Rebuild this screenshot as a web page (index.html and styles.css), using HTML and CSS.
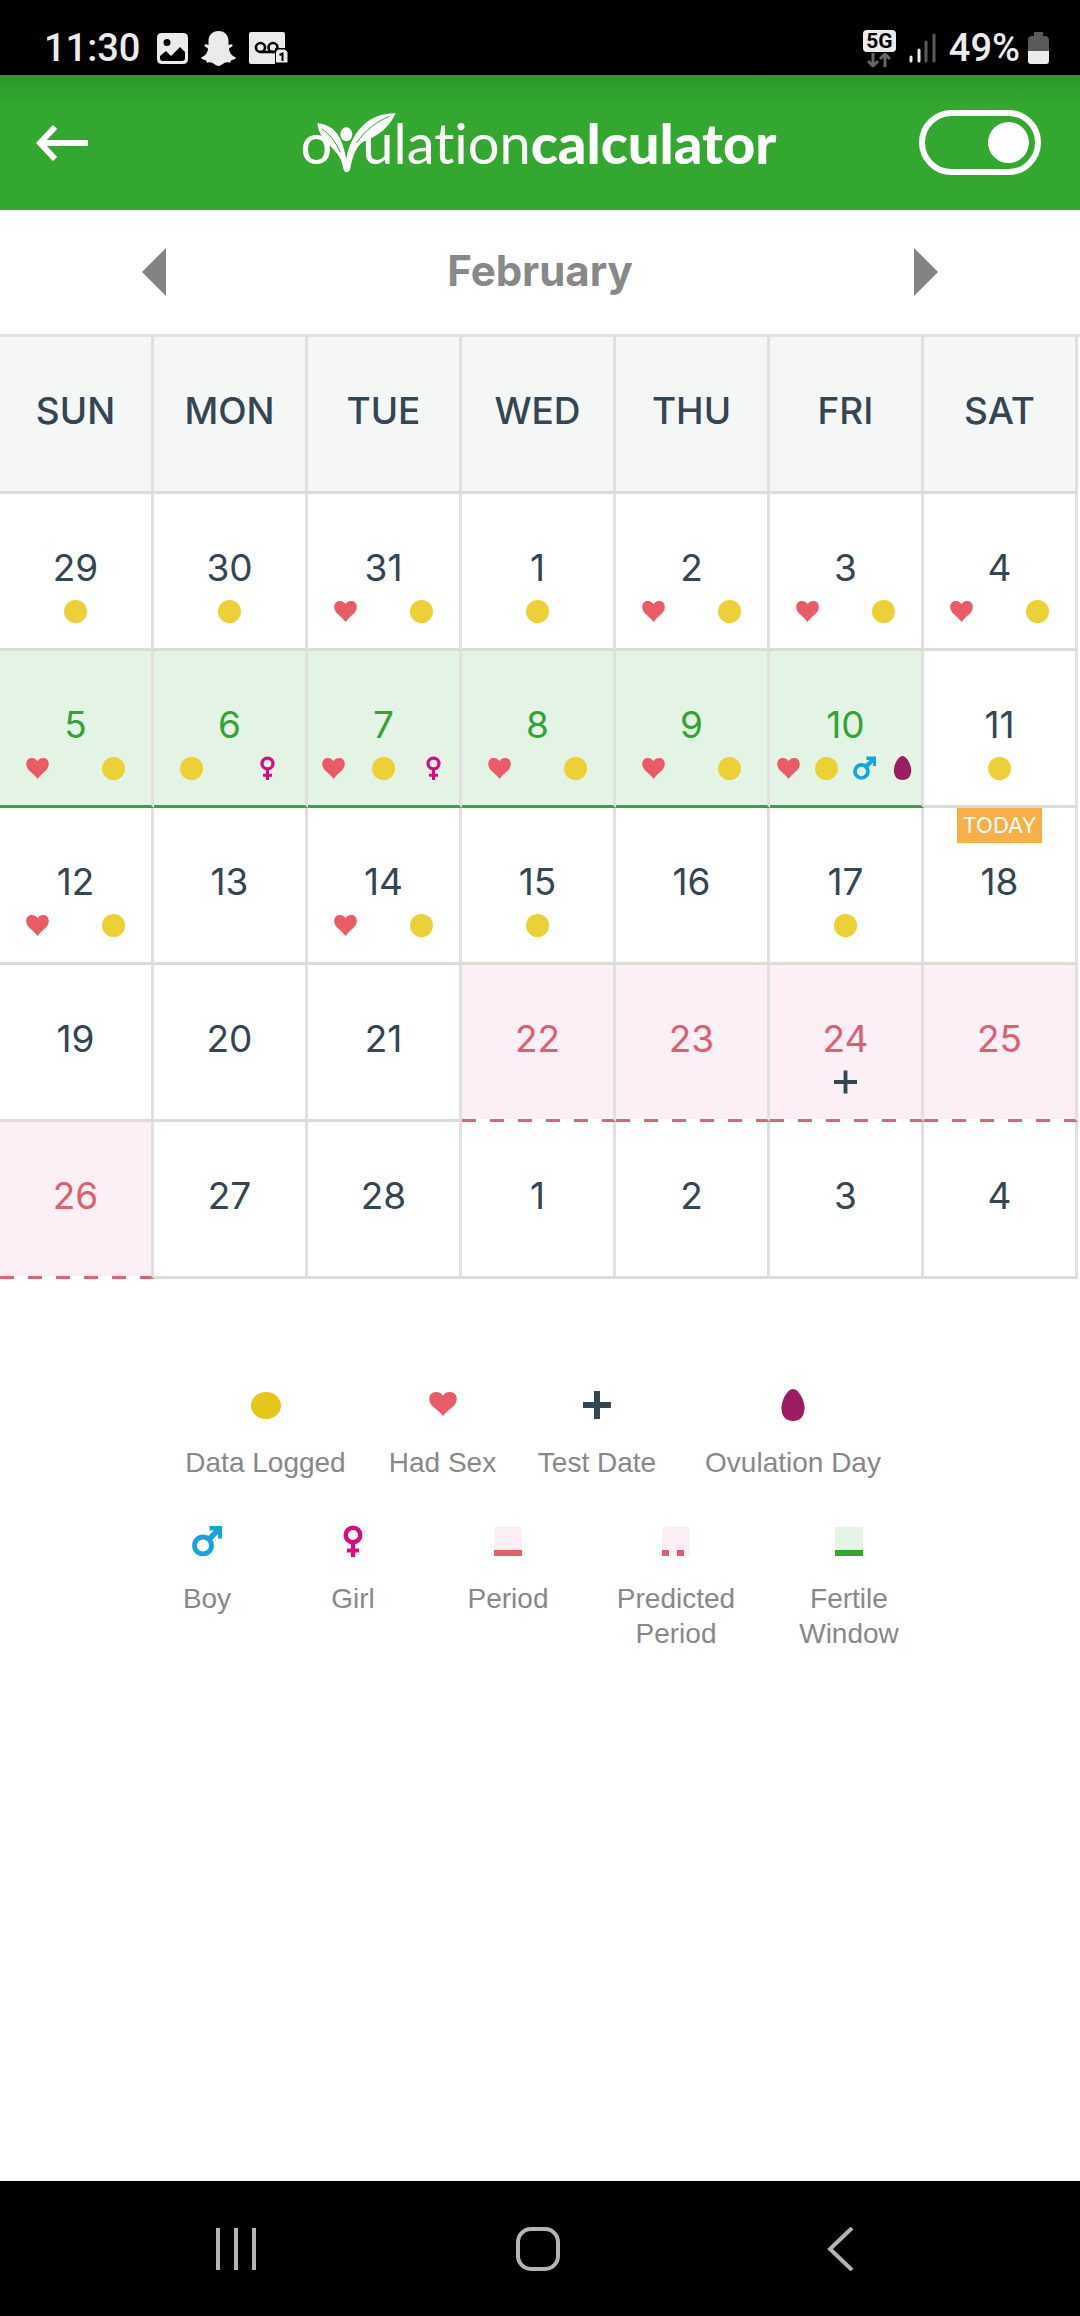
FILE: index.html
```html
<!DOCTYPE html>
<html lang="en">
<head>
    <meta charset="UTF-8">
    <meta name="viewport" content="width=device-width, initial-scale=1.0">
    <title>Ovulation Calculator</title>
    <link rel="stylesheet" href="styles.css">
</head>
<body>
    <!-- Shared icons -->
    <svg class="hidden" aria-hidden="true">
        <symbol id="dot" viewBox="0 0 24 24" preserveAspectRatio="none"><circle cx="12" cy="12" r="12"/></symbol>
        <symbol id="heart" viewBox="0 0 24 24" preserveAspectRatio="none"><path d="M12 24 C10.500 21.500 7 18.500 3 14.500 C-1.500 9.500 -.5 1 6 1 C9 1 11 2.500 12 4.500 C13 2.500 15 1 18 1 C24.500 1 25.500 9.500 21 14.500 C17 18.500 13.500 21.500 12 24Z"/></symbol>
        <symbol id="girl" viewBox="0 0 19 32"><circle cx="9.500" cy="10" r="7.300" fill="none" stroke="currentColor" stroke-width="4.400"/><path d="M7.500 18h4v5.500h4v4h-4v4.500h-4v-4.500h-4v-4h4z"/></symbol>
        <symbol id="boy" viewBox="0 0 30 30"><circle cx="11" cy="19.500" r="8.500" fill="none" stroke="currentColor" stroke-width="4.800"/><path d="M17.500 0H30V12.500H26V8L18.500 15.500L14.500 11.500L22 4.500H17.500Z"/></symbol>
        <symbol id="egg" viewBox="0 0 23 32"><path d="M11.500 0 C17 0 23 11 23 19 C23 27 19 32 11.500 32 C4 32 0 27 0 19 C0 11 6 0 11.500 0Z"/></symbol>
        <symbol id="plus" viewBox="0 0 28 28"><path d="M11 0h6v11h11v6h-11v11h-6v-11h-11v-6h11z"/></symbol>
        <symbol id="plus-thin" viewBox="0 0 24 24"><path d="M10 0h4v10h10v4h-10v10h-4v-10h-10v-4h10z"/></symbol>
    </svg>

    <div class="status-bar">
        <div class="status-left">
            <span class="clock">11:30</span>
            <svg class="status-image" viewBox="0 0 31 31"><path fill-rule="evenodd" d="M5 0H26Q31 0 31 5V26Q31 31 26 31H5Q0 31 0 26V5Q0 0 5 0ZM10 6A3.500 3.500 0 1 0 10 13A3.500 3.500 0 1 0 10 6ZM3 25Q3 28 6 28H25Q28 28 28 25V19L23 14L14 23L9 18L3 23Z"/></svg>
            <svg class="status-snap" viewBox="0 0 35 35"><path d="M17.500 0C24 0 27.500 4.500 27.500 10V14C29 14 31 12.500 31.500 14C32 16 28 16.500 28 18C28.500 22 31.500 25.500 35 26.500C34.500 28.500 31 29 30 29.500C29.500 31 29 32 27.500 31.500C22.500 30.500 21.500 35 17.500 35C13.500 35 12.500 30.500 7.500 31.500C6 32 5.500 31 5 29.500C4 29 .5 28.500 0 26.500C3.500 25.500 6.500 22 7 18C7 16.500 3 16 3.500 14C4 12.500 6 14 7.500 14V10C7.500 4.500 11 0 17.500 0Z"/></svg>
            <svg class="status-voicemail" viewBox="0 0 39 32"><path d="M2 0H34Q36 0 36 2V16H26V32H2Q0 32 0 30V2Q0 0 2 0Z"/><g fill="none" stroke="#000" stroke-width="2.600"><circle cx="11.500" cy="15.500" r="4.500"/><circle cx="24" cy="15.500" r="4.500"/><path d="M11 20H26"/></g><path stroke="#000" d="M29 17H36L39 20V31H26.500V20Z"/><path d="M30.500 23L33.500 21.500V29" fill="none" stroke="#000" stroke-width="2"/></svg>
        </div>
        <div class="status-right">
            <div class="network">
                <span>5G</span>
                <svg viewBox="0 0 24 14"><path d="M6 0V12M1 8L6 13L11 8M18 14V2M13 6L18 1L23 6" fill="none" stroke="#666" stroke-width="3"/></svg>
            </div>
            <svg class="signal" viewBox="0 0 27 30" fill="none" stroke-width="3" stroke-linecap="round"><path d="M2 24V28M10 17V28" stroke="#ebebeb"/><path d="M17 9V28M25 2V28" stroke="#5a5a5a"/></svg>
            <span>49%</span>
            <svg class="battery" viewBox="0 0 21 32"><path d="M6 0H15V4H18Q21 5 21 8V19H0V8Q0 5 3 4H6Z" fill="#5a5a5a"/><path d="M0 19H21V29Q21 32 18 32H3Q0 32 0 29Z"/></svg>
        </div>
    </div>

    <header class="app-header">
        <button type="button" class="back" aria-label="Back">
            <svg viewBox="0 0 52 36"><path d="M52 18H4M19 2L4 18L19 34" fill="none" stroke="#fff" stroke-width="6"/></svg>
        </button>
        <h1 class="logo">
            <span>o</span>
            <svg viewBox="86 38 237 180"><path d="M87 69C120 70 148 92 160 125C168 148 173 168 176 190V216C169 217 166 210 163 196C158 168 137 148 120 132C100 113 90 92 87 69ZM322 39C300 85 268 108 225 124C207 134 192 165 186 205C184 213 180 216 172 215C170 180 178 140 200 105C225 65 265 38 322 39Z"/><ellipse cx="174" cy="102" rx="18" ry="21"/><path d="M100 85C125 103 142 124 156 156M304 48C262 64 232 90 204 128" fill="none" stroke="#33a72f" stroke-width="3"/></svg>
            <span>ulation</span><b>calculator</b>
        </h1>
        <input type="checkbox" class="toggle" aria-label="Calendar view" checked>
    </header>

    <main>
        <div class="month">
            <button type="button" aria-label="Previous month"><svg viewBox="0 0 24 48"><path d="M24 0V48L0 24Z"/></svg></button>
            <h2>February</h2>
            <button type="button" aria-label="Next month"><svg viewBox="0 0 24 48"><path d="M0 0V48L24 24Z"/></svg></button>
        </div>

        <div class="calendar-wrap">
            <table class="calendar">
                <thead>
                    <tr><th>SUN</th><th>MON</th><th>TUE</th><th>WED</th><th>THU</th><th>FRI</th><th>SAT</th></tr>
                </thead>
                <tbody>
                    <tr>
                        <td>29<div class="marks"><svg class="dot"><use href="#dot"/></svg></div></td>
                        <td>30<div class="marks"><svg class="dot"><use href="#dot"/></svg></div></td>
                        <td>31<div class="marks"><svg class="heart"><use href="#heart"/></svg><svg class="dot"><use href="#dot"/></svg></div></td>
                        <td>1<div class="marks"><svg class="dot"><use href="#dot"/></svg></div></td>
                        <td>2<div class="marks"><svg class="heart"><use href="#heart"/></svg><svg class="dot"><use href="#dot"/></svg></div></td>
                        <td>3<div class="marks"><svg class="heart"><use href="#heart"/></svg><svg class="dot"><use href="#dot"/></svg></div></td>
                        <td>4<div class="marks"><svg class="heart"><use href="#heart"/></svg><svg class="dot"><use href="#dot"/></svg></div></td>
                    </tr>
                    <tr>
                        <td class="fertile">5<div class="marks"><svg class="heart"><use href="#heart"/></svg><svg class="dot"><use href="#dot"/></svg></div></td>
                        <td class="fertile">6<div class="marks"><svg class="dot"><use href="#dot"/></svg><svg class="girl"><use href="#girl"/></svg></div></td>
                        <td class="fertile">7<div class="marks"><svg class="heart"><use href="#heart"/></svg><svg class="dot"><use href="#dot"/></svg><svg class="girl"><use href="#girl"/></svg></div></td>
                        <td class="fertile">8<div class="marks"><svg class="heart"><use href="#heart"/></svg><svg class="dot"><use href="#dot"/></svg></div></td>
                        <td class="fertile">9<div class="marks"><svg class="heart"><use href="#heart"/></svg><svg class="dot"><use href="#dot"/></svg></div></td>
                        <td class="fertile">10<div class="marks"><svg class="heart"><use href="#heart"/></svg><svg class="dot"><use href="#dot"/></svg><svg class="boy"><use href="#boy"/></svg><svg class="egg"><use href="#egg"/></svg></div></td>
                        <td>11<div class="marks"><svg class="dot"><use href="#dot"/></svg></div></td>
                    </tr>
                    <tr>
                        <td>12<div class="marks"><svg class="heart"><use href="#heart"/></svg><svg class="dot"><use href="#dot"/></svg></div></td>
                        <td>13<div class="marks"></div></td>
                        <td>14<div class="marks"><svg class="heart"><use href="#heart"/></svg><svg class="dot"><use href="#dot"/></svg></div></td>
                        <td>15<div class="marks"><svg class="dot"><use href="#dot"/></svg></div></td>
                        <td>16<div class="marks"></div></td>
                        <td>17<div class="marks"><svg class="dot"><use href="#dot"/></svg></div></td>
                        <td class="today"><span class="badge">TODAY</span>18<div class="marks"></div></td>
                    </tr>
                    <tr>
                        <td>19<div class="marks"></div></td>
                        <td>20<div class="marks"></div></td>
                        <td>21<div class="marks"></div></td>
                        <td class="predicted">22<div class="marks"></div></td>
                        <td class="predicted">23<div class="marks"></div></td>
                        <td class="predicted">24<div class="marks"><svg class="plus"><use href="#plus-thin"/></svg></div></td>
                        <td class="predicted">25<div class="marks"></div></td>
                    </tr>
                    <tr>
                        <td class="predicted">26<div class="marks"></div></td>
                        <td>27<div class="marks"></div></td>
                        <td>28<div class="marks"></div></td>
                        <td>1<div class="marks"></div></td>
                        <td>2<div class="marks"></div></td>
                        <td>3<div class="marks"></div></td>
                        <td>4<div class="marks"></div></td>
                    </tr>
                </tbody>
            </table>
        </div>

        <div class="legend">
            <ul class="legend-marks">
                <li><div class="key"><svg class="dot"><use href="#dot"/></svg></div>Data Logged</li>
                <li><div class="key"><svg class="heart"><use href="#heart"/></svg></div>Had Sex</li>
                <li><div class="key"><svg class="plus"><use href="#plus"/></svg></div>Test Date</li>
                <li><div class="key"><svg class="egg"><use href="#egg"/></svg></div>Ovulation Day</li>
            </ul>
            <ul class="legend-days">
                <li><div class="key"><svg class="boy"><use href="#boy"/></svg></div>Boy</li>
                <li><div class="key"><svg class="girl"><use href="#girl"/></svg></div>Girl</li>
                <li><div class="key"><span class="swatch period"></span></div>Period</li>
                <li><div class="key"><span class="swatch guess"></span></div>Predicted<br>Period</li>
                <li><div class="key"><span class="swatch window"></span></div>Fertile<br>Window</li>
            </ul>
        </div>
    </main>

    <nav class="nav-bar">
        <button type="button" aria-label="Recent apps"><svg viewBox="0 0 44 44"><path d="M4 1V43M22 1V43M40 1V43"/></svg></button>
        <button type="button" aria-label="Home"><svg viewBox="0 0 44 44"><rect x="2" y="2" width="40" height="40" rx="13"/></svg></button>
        <button type="button" aria-label="Go back"><svg viewBox="0 0 44 44"><path d="M34 1L12 22L34 43"/></svg></button>
    </nav>
</body>
</html>
```
FILE: styles.css
```css
* {
    box-sizing: border-box;
}
body {
    margin: 0;
    min-height: 100vh;
    display: flex;
    flex-direction: column;
    background: #fff;
    font-family: Inter, "Liberation Sans", sans-serif;
    color: #344553;
}
button {
    padding: 0;
    border: none;
    background: none;
    color: inherit;
    cursor: pointer;
}
svg {
    display: block;
    fill: currentColor;
}
.hidden {
    display: none;
}

/* Status bar */
.status-bar {
    display: flex;
    justify-content: space-between;
    height: 75px;
    padding: 20px 31px 0 44px;
    background: #000;
    color: #ebebeb;
    font-family: Roboto, sans-serif;
    font-size: 38px;
    font-weight: 500;
    line-height: 54px;
}
.status-left, .status-right {
    display: flex;
    align-items: center;
    height: 56px;
}
.status-left {
    gap: 13px;
}
.clock {
    margin-right: 4px;
}
.status-image {
    width: 31px;
    height: 31px;
}
.status-snap {
    width: 35px;
    height: 35px;
}
.status-voicemail {
    width: 39px;
    height: 32px;
}
.status-right {
    gap: 13px;
}
.network span {
    display: block;
    width: 33px;
    border-radius: 4px;
    background: #ebebeb;
    color: #000;
    font-size: 21px;
    font-weight: 700;
    line-height: 22px;
    text-align: center;
}
.network svg {
    width: 24px;
    height: 14px;
    margin: 1px auto 0;
}
.signal {
    width: 27px;
    height: 30px;
}
.battery {
    width: 21px;
    height: 32px;
    margin-left: -5px;
}

/* Header */
.app-header {
    display: grid;
    grid-template-columns: 1fr auto 1fr;
    align-items: center;
    height: 135px;
    padding: 0 39px 0 36px;
    background: linear-gradient(#2f972c, #33a72f 30px);
    color: #fff;
}
.back {
    justify-self: start;
}
.back svg {
    width: 52px;
    height: 36px;
}
.logo {
    display: flex;
    align-items: center;
    margin: 0;
    font-family: Lato, sans-serif;
    font-size: 56px;
    font-weight: 400;
    font-variant-ligatures: none;
    line-height: 64px;
}
.logo svg {
    width: 79px;
    height: 60px;
    margin: 0 -34px 0 -15px;
}
.logo b {
    font-weight: 900;
}
.toggle {
    appearance: none;
    justify-self: end;
    width: 122px;
    height: 65px;
    margin: 0;
    padding: 6px;
    border: 6px solid #fff;
    border-radius: 33px;
}
.toggle::before {
    content: "";
    display: block;
    width: 41px;
    height: 41px;
    border-radius: 50%;
    background: #fff;
}
.toggle:checked::before {
    margin-left: auto;
}

/* Month switcher */
.month {
    display: flex;
    justify-content: space-between;
    align-items: center;
    height: 124px;
    padding: 0 142px;
    color: #828282;
}
.month svg {
    width: 24px;
    height: 48px;
}
.month h2 {
    margin: 0;
    padding-bottom: 4px;
    font-size: 42px;
    font-weight: 700;
    color: #888;
}

/* Calendar */
.calendar-wrap {
    padding-right: 2px;
    border-top: 3px solid #e0e0e0;
}
.calendar {
    width: 100%;
    table-layout: fixed;
    border-collapse: separate;
    border-spacing: 0;
    font-size: 37px;
    font-weight: 400;
    line-height: 46px;
    text-align: center;
}
.calendar th, .calendar td {
    position: relative;
    height: 157px;
    padding: 51px 0 0;
    border-right: 3px solid #e0e0e0;
    border-bottom: 3px solid #dcdbd6;
    vertical-align: top;
}
.calendar th {
    background: #f5f7f7;
    font-weight: 500;
}
.calendar .fertile {
    border-bottom-color: #3f9f43;
    background: #e3f4e4;
    color: #35a236;
}
.calendar .predicted {
    border-bottom-color: transparent;
    background: repeating-linear-gradient(90deg, #dd6472 0 14px, #fff 14px 28px) left bottom / 100% 3px no-repeat border-box, #fceff5;
    color: #dd5f70;
}
.marks {
    display: flex;
    justify-content: space-around;
    align-items: center;
    height: 24px;
    margin-top: 8px;
}
.marks svg {
    height: 24px;
}
.badge {
    position: absolute;
    top: 0;
    left: 50%;
    transform: translateX(-50%);
    padding: 0 6px;
    background: #f9af48;
    color: #fff;
    font-size: 22px;
    line-height: 35px;
}

/* Icons */
.dot {
    width: 23px;
    color: #ecd136;
}
.heart {
    width: 23px;
    color: #ea5b68;
}
.marks .dot {
    height: 23px;
}
.marks .heart {
    height: 22px;
}
.girl {
    width: 23px;
    color: #db0a83;
}
.boy {
    width: 23px;
    color: #14a5df;
}
.egg {
    width: 23px;
    color: #9c1c62;
}
.plus {
    width: 23px;
    color: #344553;
}

/* Legend */
.legend {
    padding-top: 110px;
    font-family: "Liberation Sans", sans-serif;
    font-size: 28px;
    line-height: 35px;
    text-align: center;
    color: #888;
}
.legend ul {
    display: grid;
    justify-content: center;
    margin: 0 0 45px;
    padding: 0;
    list-style: none;
}
.legend .legend-marks {
    grid-template-columns: 177px 177px 132px 260px;
    padding-left: 20px;
}
.legend .legend-days {
    grid-template-columns: 146px 146px 164px 172px 174px;
    padding-right: 10px;
}
.key {
    display: flex;
    justify-content: center;
    align-items: center;
    height: 32px;
    margin-bottom: 24px;
}
.key svg {
    width: 30px;
    height: 30px;
}
.key .dot {
    height: 27px;
    color: #e6c619;
}
.key .heart {
    width: 28px;
    height: 25px;
    margin-bottom: 4px;
}
.key .plus {
    width: 28px;
    height: 28px;
}
.key .egg, .key .girl {
    height: 32px;
}
.swatch {
    width: 28px;
    height: 29px;
    border-bottom: 6px solid #e35f6c;
    background: #fceff5;
}
.swatch.guess {
    border-bottom: none;
    background: repeating-linear-gradient(90deg, #d8606f 0 7px, transparent 7px 15px) left bottom / 22px 6px no-repeat, #fceff5;
}
.swatch.window {
    border-bottom-color: #33a72f;
    background: #e3f4e4;
}

/* Phone navigation */
.nav-bar {
    display: grid;
    grid-template-columns: repeat(3, 1fr);
    align-items: center;
    height: 135px;
    margin-top: auto;
    padding: 0 89px 0 85px;
    background: #000;
}
.nav-bar svg {
    width: 44px;
    height: 44px;
    margin: 0 auto;
    fill: none;
    stroke: #b4b4b4;
    stroke-width: 4px;
}
```
